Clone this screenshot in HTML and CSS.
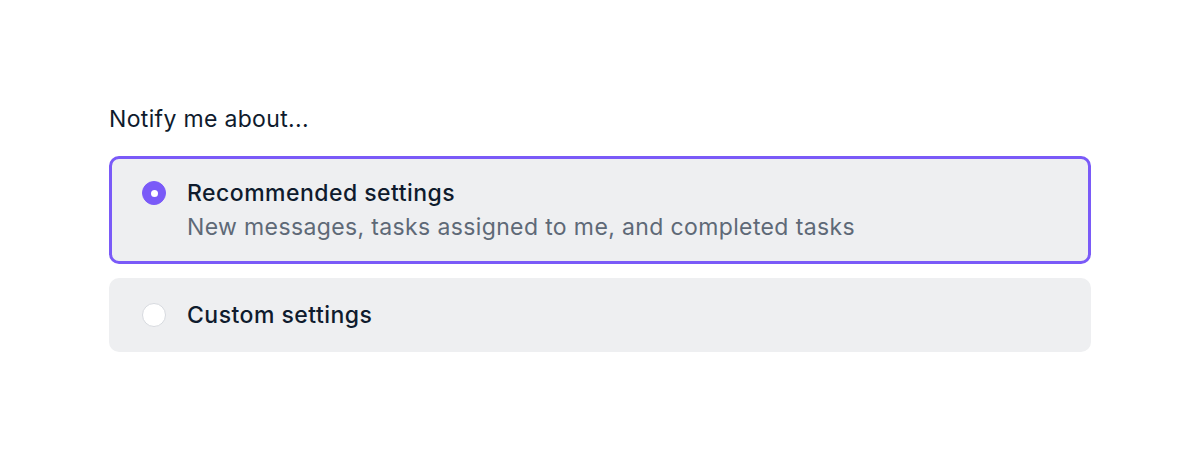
FILE: index.html
```html
<!DOCTYPE html>
<html>
<head>
<meta charset="utf-8">
<link rel="stylesheet" href="styles.css">
</head>
<body>
<div class="page">
  <fieldset class="group">
    <div class="legend">Notify me about...</div>
    <div class="options">
      <label class="option selected">
        <span class="radio checked"></span>
        <span class="text">
          <span class="title">Recommended settings</span>
          <span class="desc">New messages, tasks assigned to me, and completed tasks</span>
        </span>
      </label>
      <label class="option">
        <span class="radio"></span>
        <span class="text">
          <span class="title">Custom settings</span>
        </span>
      </label>
    </div>
  </fieldset>
</div>
</body>
</html>
```
FILE: styles.css
```css
html, body {
  margin: 0;
  padding: 0;
  background: #ffffff;
}
body {
  font-family: Inter, "Noto Sans", sans-serif;
  color: #0f1b2d;
}
.page {
  padding: 105px 109px 0 109px;
}
.group {
  border: 0;
  margin: 0;
  padding: 0;
}
.legend {
  font-size: 23px;
  line-height: 28px;
  letter-spacing: 0.33px;
  font-weight: 400;
  color: #0f1b2d;
  margin-bottom: 23px;
}
.options {
  display: flex;
  flex-direction: column;
  gap: 14px;
}
.option {
  display: flex;
  align-items: flex-start;
  gap: 21px;
  background: #eeeff1;
  border: 3px solid transparent;
  border-radius: 10px;
  padding: 20px 30px;
}
.option.selected {
  border-color: #7a5af8;
}
.radio {
  flex: none;
  width: 24px;
  height: 24px;
  margin-top: 2px;
  box-sizing: border-box;
  border-radius: 50%;
  background: #ffffff;
  border: 1px solid #d7dadf;
  display: flex;
  align-items: center;
  justify-content: center;
}
.radio.checked {
  background: #7a5af8;
  border-color: #7a5af8;
}
.radio.checked::after {
  content: "";
  width: 7px;
  height: 7px;
  border-radius: 50%;
  background: #ffffff;
}
.text {
  display: flex;
  flex-direction: column;
  gap: 6px;
}
.title {
  font-size: 23px;
  line-height: 28px;
  letter-spacing: 0.47px;
  font-weight: 500;
  color: #0f1b2d;
}
.desc {
  font-size: 23px;
  line-height: 28px;
  letter-spacing: 0.37px;
  font-weight: 400;
  color: #5e6977;
}
```
